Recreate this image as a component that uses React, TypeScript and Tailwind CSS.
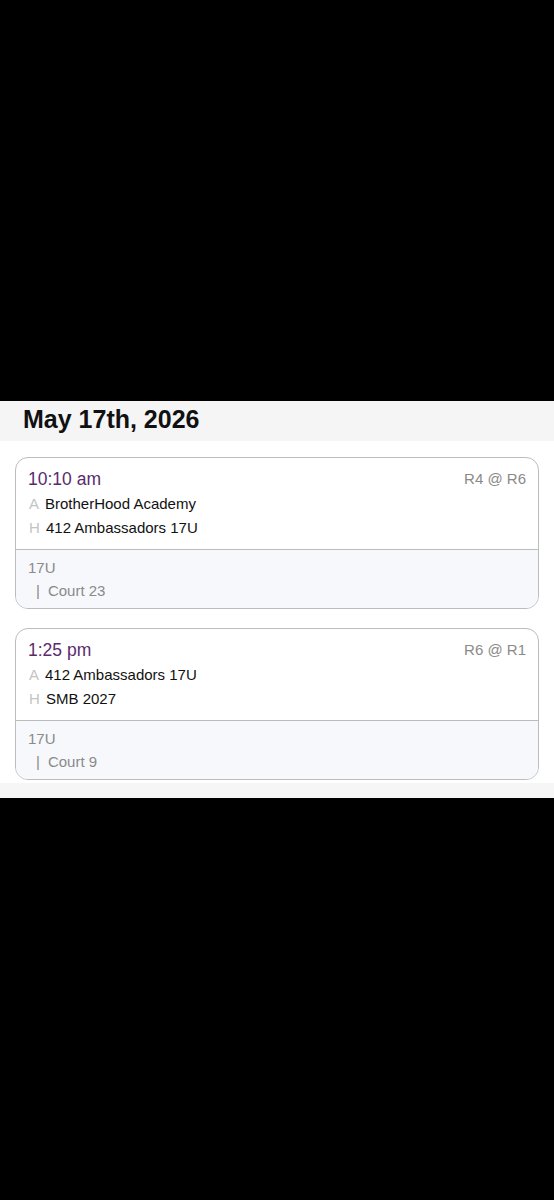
import React from 'react';

type Game = {
  time: string;
  matchup: string;
  away: string;
  home: string;
  division: string;
  court: string;
};

const games: Game[] = [
  {
    time: '10:10 am',
    matchup: 'R4 @ R6',
    away: 'BrotherHood Academy',
    home: '412 Ambassadors 17U',
    division: '17U',
    court: 'Court 23',
  },
  {
    time: '1:25 pm',
    matchup: 'R6 @ R1',
    away: '412 Ambassadors 17U',
    home: 'SMB 2027',
    division: '17U',
    court: 'Court 9',
  },
];

const GameCard = ({ game }: { game: Game }) => {
  return (
    <div className="mx-[15px] rounded-[13px] border border-[#bcbcbc] overflow-hidden bg-white">
      {/* teams */}
      <div className="pt-[11px] pb-[9px] pl-[12px] pr-[12px]">
        <div className="flex items-center justify-between h-[20px]">
          <span className="text-[17.5px] text-[#5a2b6c]">{game.time}</span>
          <span className="text-[15px] text-[#8a8a8a]">{game.matchup}</span>
        </div>
        <div className="mt-[3px] flex items-center h-[24px] text-[15px]">
          <span className="w-[17px] pl-[1px] text-[#c4c4c4]">A</span>
          <span className="text-[#111]">{game.away}</span>
        </div>
        <div className="flex items-center h-[24px] text-[15px]">
          <span className="w-[18px] pl-[1px] text-[#c4c4c4]">H</span>
          <span className="text-[#111]">{game.home}</span>
        </div>
      </div>

      {/* venue */}
      <div className="border-t border-[#bcbcbc] bg-[#f7f8fc] pt-[8px] pb-[7px] pl-[12px]">
        <div className="h-[20px] flex items-center text-[15px] text-[#8a8a8a]">{game.division}</div>
        <div className="mt-[3px] h-[20px] flex items-center text-[15px] text-[#8a8a8a]">
          <span className="ml-[8px] mr-[8px]">|</span>
          <span>{game.court}</span>
        </div>
      </div>
    </div>
  );
};

export default function App() {
  return (
    <div
      className="w-[554px] h-[1200px] bg-black"
      style={{ fontFamily: '"Liberation Sans", Arial, sans-serif' }}
    >
      <div className="h-[401px]" />

      {/* date header */}
      <div className="h-[40px] bg-[#f5f5f5] flex items-center pl-[23px]">
        <h1 className="text-[25px] font-bold text-[#111] leading-none -mt-[4px]">May 17th, 2026</h1>
      </div>

      {/* games */}
      <div className="bg-white pt-[16px] pb-[3px] flex flex-col gap-[19px]">
        {games.map((g) => (
          <GameCard key={g.time} game={g} />
        ))}
      </div>
      <div className="h-[15px] bg-[#f6f6f6]" />
    </div>
  );
}
